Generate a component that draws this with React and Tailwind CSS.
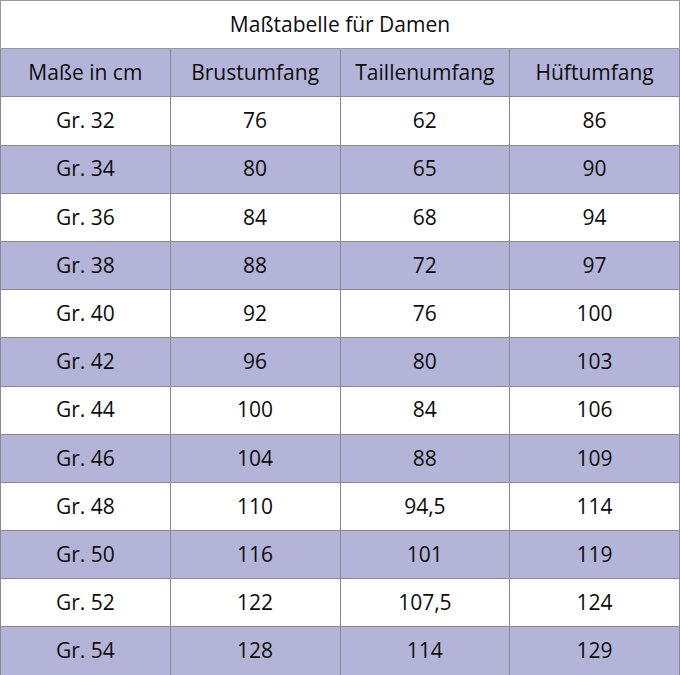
import React from 'react';

const rows = [
  ['Gr. 32', '76', '62', '86'],
  ['Gr. 34', '80', '65', '90'],
  ['Gr. 36', '84', '68', '94'],
  ['Gr. 38', '88', '72', '97'],
  ['Gr. 40', '92', '76', '100'],
  ['Gr. 42', '96', '80', '103'],
  ['Gr. 44', '100', '84', '106'],
  ['Gr. 46', '104', '88', '109'],
  ['Gr. 48', '110', '94,5', '114'],
  ['Gr. 50', '116', '101', '119'],
  ['Gr. 52', '122', '107,5', '124'],
  ['Gr. 54', '128', '114', '129'],
];

const headers = ['Maße in cm', 'Brustumfang', 'Taillenumfang', 'Hüftumfang'];

export default function App() {
  return (
    <div className="w-[680px] h-[675px] bg-white" style={{ fontFamily: '"Open Sans", sans-serif' }}>
      <table className="w-[680px] border-collapse table-fixed text-[21px] text-[#0d0d0d]">
        <tbody>
          <tr className="h-[48.2px]">
            <td colSpan={4} className="border border-[#9a9a9a] text-center">
              Maßtabelle für Damen
            </td>
          </tr>
          <tr className="h-[48.2px] bg-[#b4b4d8]">
            {headers.map((h) => (
              <td key={h} className="border border-[#8a8a96] text-center">{h}</td>
            ))}
          </tr>
          {rows.map((r, i) => (
            <tr key={r[0]} className={`h-[48.2px] ${i % 2 === 1 ? 'bg-[#b4b4d8]' : 'bg-white'}`}>
              {r.map((c, j) => (
                <td key={j} className="border border-[#8a8a96] text-center">{c}</td>
              ))}
            </tr>
          ))}
        </tbody>
      </table>
    </div>
  );
}
